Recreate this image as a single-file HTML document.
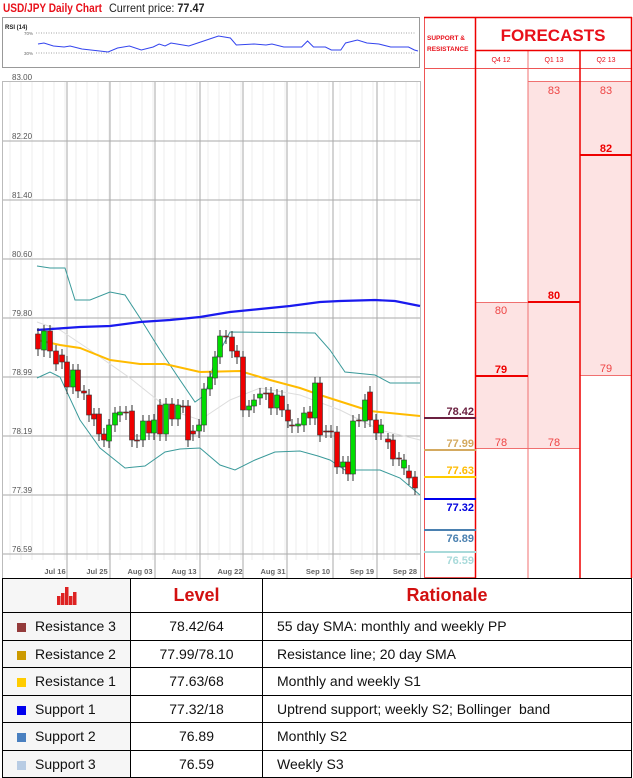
<!DOCTYPE html>
<html><head><meta charset="utf-8"><style>
*{margin:0;padding:0;box-sizing:border-box}
body{width:633px;height:778px;background:#fff;position:relative;overflow:hidden;font-family:"Liberation Sans",sans-serif}
.a{position:absolute}
table{border-collapse:collapse;position:absolute;left:2px;top:578px;width:630px}
td{border:1px solid #000;font-size:14px;color:#111;height:27.5px}
.sq{display:inline-block;width:9px;height:9px;margin:0 9px 0 14px;vertical-align:-1px}
</style></head><body>
<div class="a" style="left:3px;top:1px;font-size:12px;font-weight:bold;color:#e8101a;transform:scaleX(.84);transform-origin:0 0;white-space:nowrap">USD/JPY Daily Chart</div>
<div class="a" style="left:109px;top:1px;font-size:12px;color:#222;transform:scaleX(.9);transform-origin:0 0;white-space:nowrap">Current price: <b>77.47</b></div>

<svg class="a" style="left:0;top:0" width="633" height="578">
<rect x="2.5" y="17.5" width="417" height="50" fill="#fff" stroke="#999"/>
<text x="5" y="29" font-size="6" font-family="Liberation Sans" font-weight="bold" fill="#222">RSI (14)</text>
<text x="24" y="35" font-size="4.5" font-family="Liberation Sans" fill="#666">70%</text>
<text x="24" y="55" font-size="4.5" font-family="Liberation Sans" fill="#666">30%</text>
<line x1="36" y1="33" x2="416" y2="33" stroke="#888" stroke-dasharray="1,1.5" stroke-width=".8"/>
<line x1="36" y1="53" x2="416" y2="53" stroke="#888" stroke-dasharray="1,1.5" stroke-width=".8"/>
<polyline fill="none" stroke="#3344ee" stroke-width="1" vector-effect="non-scaling-stroke" transform="translate(-1.2,0) scale(1.1875,1)" points="33,44 38,43 46,46 55,47 60,46 70,49 85,51 92,52 100,48 110,46 120,50 130,47 135,44 140,46 145,43 150,44 160,46 170,42 180,38 185,36 195,38 200,45 215,44 225,45 230,44 240,47 255,47 260,41 265,47 275,47 280,50 288,50 292,43 302,40 310,43 320,44 330,47 345,47 350,50 353,51"/>
<rect x="2.5" y="81.5" width="418" height="497" fill="#fff" stroke="#bbb"/>
<g id="minor" stroke="#eee" stroke-width="1"></g>
<g stroke="#aaa" stroke-width="1">
<line x1="67" y1="82" x2="67" y2="578"/><line x1="110" y1="82" x2="110" y2="578"/><line x1="155" y1="82" x2="155" y2="578"/><line x1="200" y1="82" x2="200" y2="578"/><line x1="243" y1="82" x2="243" y2="578"/><line x1="287" y1="82" x2="287" y2="578"/><line x1="333" y1="82" x2="333" y2="578"/><line x1="377" y1="82" x2="377" y2="578"/>
<line x1="3" y1="141" x2="420" y2="141"/><line x1="3" y1="200" x2="420" y2="200"/><line x1="3" y1="259" x2="420" y2="259"/><line x1="3" y1="318" x2="420" y2="318"/><line x1="3" y1="377" x2="420" y2="377"/><line x1="3" y1="436" x2="420" y2="436"/><line x1="3" y1="495" x2="420" y2="495"/><line x1="3" y1="554" x2="420" y2="554"/>
</g>
<g font-size="8" font-family="Liberation Sans" fill="#555">
<text x="12" y="80">83.00</text><text x="12" y="139">82.20</text><text x="12" y="198">81.40</text><text x="12" y="257">80.60</text><text x="12" y="316">79.80</text><text x="12" y="375">78.99</text><text x="12" y="434">78.19</text><text x="12" y="493">77.39</text><text x="12" y="552">76.59</text>
</g>
<g font-size="7.5" font-family="Liberation Sans" font-weight="bold" fill="#666" text-anchor="middle">
<text x="55" y="574">Jul 16</text><text x="97" y="574">Jul 25</text><text x="140" y="574">Aug 03</text><text x="184" y="574">Aug 13</text><text x="230" y="574">Aug 22</text><text x="273" y="574">Aug 31</text><text x="318" y="574">Sep 10</text><text x="362" y="574">Sep 19</text><text x="405" y="574">Sep 28</text>
</g>
<polyline fill="none" stroke="#ddd" stroke-width="1" points="37,322 60,330 90,350 130,378 170,410 200,420 230,400 260,388 300,395 340,410 380,430 420,440"/>
<polyline fill="none" stroke="#3a9a9a" stroke-width="1" points="37,266 50,268 65,268 75,300 90,300 110,292 125,295 140,318 160,350 180,380 195,402 205,395 215,360 230,332 315,333 330,350 345,372 375,375 390,383 420,383"/>
<polyline fill="none" stroke="#3a9a9a" stroke-width="1" points="37,378 50,372 60,377 80,420 100,448 125,468 145,466 165,452 180,449 200,448 220,465 235,470 255,460 275,452 300,451 318,456 330,460 345,470 380,470 400,478 420,495"/>
<polyline fill="none" stroke="#ffbb00" stroke-width="2" points="37,340 60,345 80,348 110,360 140,364 165,364 200,372 240,371 270,380 300,388 320,395 345,403 370,411 420,416"/>
<polyline fill="none" stroke="#1a1aee" stroke-width="2.2" points="37,330 80,327 110,326 140,322 170,320 200,317 230,312 260,309 290,306 320,302 340,301 375,300 395,301 420,306"/>
<g id="c"></g>
<rect x="424.5" y="17.5" width="51" height="560" fill="#fff" stroke="#ee5555"/>
<text x="427" y="40" font-size="6.5" font-family="Liberation Sans" font-weight="bold" fill="#e8101a">SUPPORT &amp;</text>
<text x="427" y="51" font-size="6.5" font-family="Liberation Sans" font-weight="bold" fill="#e8101a">RESISTANCE</text>
<line x1="424" y1="68.5" x2="632" y2="68.5" stroke="#ee5555"/>
<rect x="476" y="302" width="52" height="147" fill="#fde3e3"/>
<rect x="528" y="81" width="52" height="368" fill="#fde3e3"/>
<rect x="580" y="81" width="52" height="295" fill="#fde3e3"/>
<g stroke="#f07070" stroke-width="1">
<line x1="528" y1="81.5" x2="632" y2="81.5"/><line x1="476" y1="302.5" x2="528" y2="302.5"/><line x1="476" y1="448.5" x2="580" y2="448.5"/><line x1="580" y1="375.5" x2="632" y2="375.5"/><line x1="528" y1="50.5" x2="528" y2="578"/>
</g>
<g stroke="#e00" stroke-width="2">
<line x1="580" y1="155" x2="632" y2="155"/><line x1="528" y1="302" x2="580" y2="302"/><line x1="476" y1="376" x2="528" y2="376"/>
</g>
<g stroke="#e00" stroke-width="1.5">
<line x1="475.5" y1="17" x2="475.5" y2="578"/><line x1="580" y1="50" x2="580" y2="578"/><line x1="631.5" y1="17" x2="631.5" y2="578"/><line x1="475" y1="50.5" x2="632" y2="50.5"/><line x1="424" y1="17.5" x2="632" y2="17.5"/>
</g>
<text x="553" y="41" font-size="17" font-family="Liberation Sans" font-weight="bold" fill="#e8101a" text-anchor="middle">FORECASTS</text>
<g font-size="7" font-family="Liberation Sans" fill="#e8101a" text-anchor="middle">
<text x="501" y="62">Q4 12</text><text x="554" y="62">Q1 13</text><text x="606" y="62">Q2 13</text></g>
<g font-size="11" font-family="Liberation Sans" fill="#ee4444" text-anchor="middle">
<text x="554" y="94">83</text><text x="606" y="94">83</text><text x="501" y="314">80</text><text x="606" y="372">79</text><text x="501" y="446">78</text><text x="554" y="446">78</text></g>
<g font-size="11" font-family="Liberation Sans" font-weight="bold" fill="#e00" text-anchor="middle">
<text x="606" y="152">82</text><text x="554" y="299">80</text><text x="501" y="373">79</text></g>
<line x1="424" y1="418" x2="476" y2="418" stroke="#6b2040" stroke-width="2"/>
<line x1="424" y1="450" x2="476" y2="450" stroke="#d4aa60" stroke-width="2"/>
<line x1="424" y1="477" x2="476" y2="477" stroke="#ffcc00" stroke-width="2"/>
<line x1="424" y1="499" x2="476" y2="499" stroke="#0000ee" stroke-width="2"/>
<line x1="424" y1="530" x2="476" y2="530" stroke="#4a80b0" stroke-width="2"/>
<line x1="424" y1="552" x2="476" y2="552" stroke="#a8dada" stroke-width="2"/>
<g font-size="11" font-family="Liberation Sans" font-weight="bold" text-anchor="end">
<text x="474" y="415" fill="#6b2040">78.42</text><text x="474" y="447" fill="#d4aa60">77.99</text><text x="474" y="474" fill="#ffbb00">77.63</text><text x="474" y="511" fill="#0000dd">77.32</text><text x="474" y="542" fill="#4a80b0">76.89</text><text x="474" y="564" fill="#a8dada">76.59</text></g>
</svg>

<table>
<tr style="height:34px"><td style="width:128px;text-align:center;background:#f6f6f6">
<svg width="20" height="18" style="vertical-align:middle"><rect x="0" y="9" width="3.5" height="9" fill="#d22"/><rect x="4" y="6" width="3.5" height="12" fill="#d22"/><rect x="8" y="0" width="3.5" height="18" fill="#d22"/><rect x="12" y="9" width="3.5" height="9" fill="#d22"/><rect x="16" y="5" width="3.5" height="13" fill="#d22"/></svg></td>
<td style="width:132px;text-align:center;font-size:18px;font-weight:bold;color:#d21010">Level</td>
<td style="text-align:center;font-size:18px;font-weight:bold;color:#d21010">Rationale</td></tr>
<tr><td style="background:#f6f6f6"><span class="sq" style="background:#943b3b"></span>Resistance 3</td><td style="text-align:center">78.42/64</td><td style="padding-left:14px">55 day SMA: monthly and weekly PP</td></tr>
<tr><td style="background:#f6f6f6"><span class="sq" style="background:#cc9a00"></span>Resistance 2</td><td style="text-align:center">77.99/78.10</td><td style="padding-left:14px">Resistance line; 20 day SMA</td></tr>
<tr><td style="background:#f6f6f6"><span class="sq" style="background:#ffcc00"></span>Resistance 1</td><td style="text-align:center">77.63/68</td><td style="padding-left:14px">Monthly and weekly S1</td></tr>
<tr><td style="background:#f6f6f6"><span class="sq" style="background:#0000ee"></span>Support 1</td><td style="text-align:center">77.32/18</td><td style="padding-left:14px">Uptrend support; weekly S2; Bollinger&nbsp; band</td></tr>
<tr><td style="background:#f6f6f6"><span class="sq" style="background:#4a80c0"></span>Support 2</td><td style="text-align:center">76.89</td><td style="padding-left:14px">Monthly S2</td></tr>
<tr><td style="background:#f6f6f6"><span class="sq" style="background:#b8cce4"></span>Support 3</td><td style="text-align:center">76.59</td><td style="padding-left:14px">Weekly S3</td></tr>
</table>
<script>
var d=[[38,334,349],[44,350,331],[50,331,351],[56,351,364],[62,355,362],[67,362,387],[73,387,370],[78,370,391],[84,391,393],[89,395,415],[94,414,419],[99,414,434],[104,434,440],[109,441,425],[115,425,413],[120,415,412],[126,412,413],[132,411,440],[137,440,441],[143,440,421],[149,421,433],[154,433,420],[160,405,434],[166,434,404],[172,404,419],[178,419,405],[183,406,406],[188,406,440],[193,431,434],[199,431,425],[204,425,389],[210,389,377],[215,378,357],[220,357,336],[226,336,337],[232,337,351],[237,351,357],[243,357,410],[249,410,406],[254,406,400],[260,398,394],[266,393,393],[271,393,408],[277,408,395],[282,396,410],[288,410,421],[292,425,426],[298,426,424],[304,425,413],[310,412,418],[315,418,383],[320,383,435],[326,431,431],[331,431,431],[337,432,467],[343,467,462],[348,462,474],[353,474,421],[359,420,420],[365,421,400],[370,392,420],[376,420,433],[381,433,425],[388,439,442],[393,440,459],[399,458,459],[404,468,460],[409,471,478],[415,477,488]];
var s='';d.forEach(function(c){var x=c[0],o=c[1],cl=c[2],t=Math.min(o,cl),b=Math.max(o,cl),h=Math.max(b-t,1);var col=cl<o?'#00dd00':'#ee0000';
s+='<line x1="'+x+'" y1="'+(t-6)+'" x2="'+x+'" y2="'+(b+7)+'" stroke="#333" stroke-width="1"/>';
s+='<rect x="'+(x-2.5)+'" y="'+t+'" width="5" height="'+h+'" fill="'+col+'" stroke="#333" stroke-width=".6"/>';});
document.getElementById('c').innerHTML=s;
var m='';for(var x=10;x<420;x+=11){m+='<line x1="'+x+'" y1="82" x2="'+x+'" y2="560"/>';}document.getElementById('minor').innerHTML=m;
</script>
</body></html>
